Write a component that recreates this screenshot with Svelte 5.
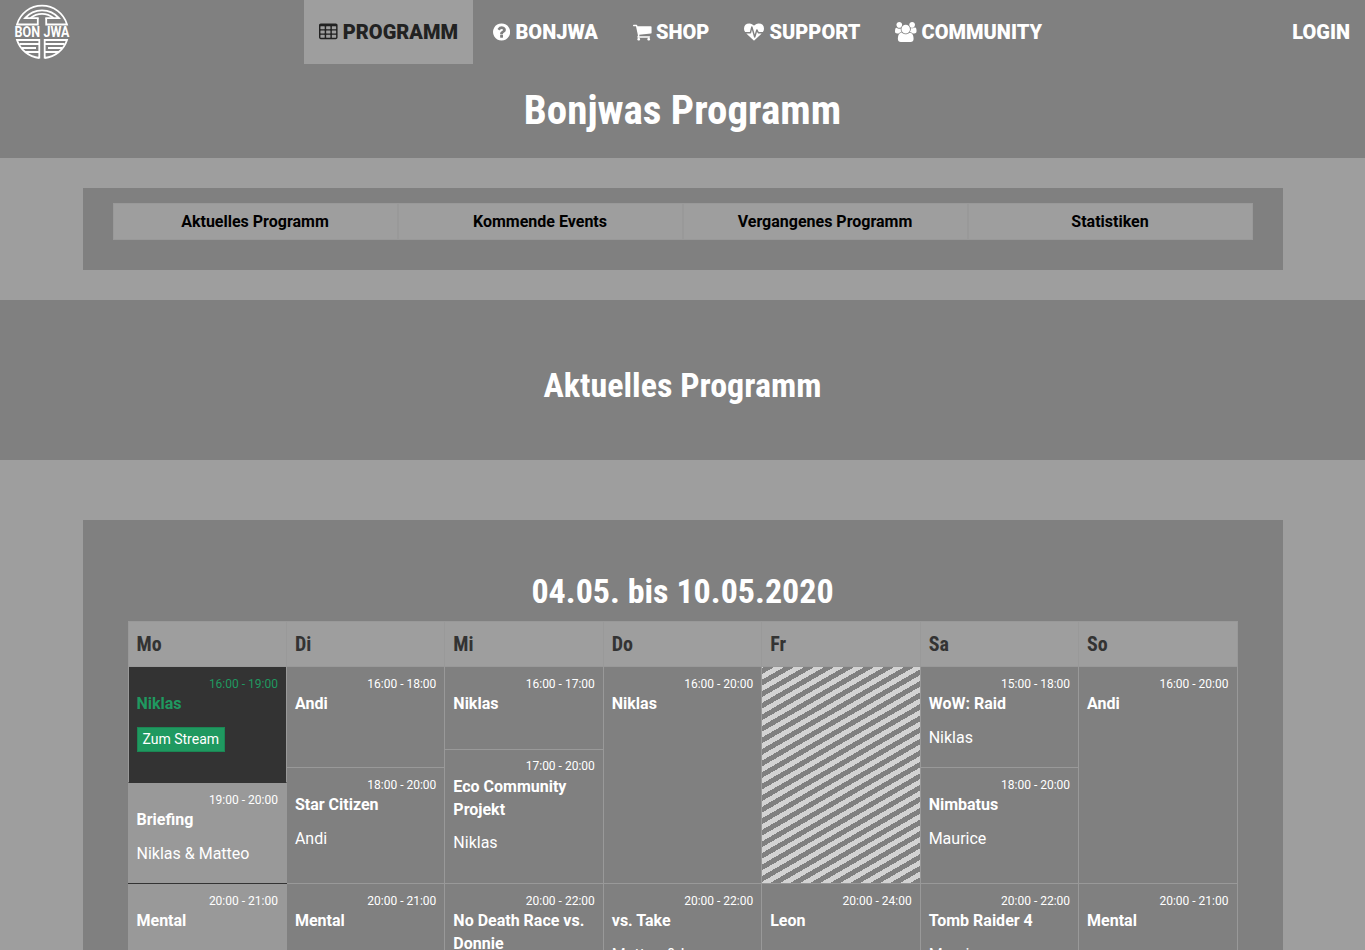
<script>
  const icons = {
    table: {
      box: '64 0 1664 1792', w: 18.57,
      d: 'M576 1376v-192q0-14-9-23t-23-9h-320q-14 0-23 9t-9 23v192q0 14 9 23t23 9h320q14 0 23-9t9-23zm0-384v-192q0-14-9-23t-23-9h-320q-14 0-23 9t-9 23v192q0 14 9 23t23 9h320q14 0 23-9t9-23zm512 384v-192q0-14-9-23t-23-9h-320q-14 0-23 9t-9 23v192q0 14 9 23t23 9h320q14 0 23-9t9-23zm-512-768v-192q0-14-9-23t-23-9h-320q-14 0-23 9t-9 23v192q0 14 9 23t23 9h320q14 0 23-9t9-23zm512 384v-192q0-14-9-23t-23-9h-320q-14 0-23 9t-9 23v192q0 14 9 23t23 9h320q14 0 23-9t9-23zm512 384v-192q0-14-9-23t-23-9h-320q-14 0-23 9t-9 23v192q0 14 9 23t23 9h320q14 0 23-9t9-23zm-512-768v-192q0-14-9-23t-23-9h-320q-14 0-23 9t-9 23v192q0 14 9 23t23 9h320q14 0 23-9t9-23zm512 384v-192q0-14-9-23t-23-9h-320q-14 0-23 9t-9 23v192q0 14 9 23t23 9h320q14 0 23-9t9-23zm0-384v-192q0-14-9-23t-23-9h-320q-14 0-23 9t-9 23v192q0 14 9 23t23 9h320q14 0 23-9t9-23zm128-320v1088q0 66-47 113t-113 47h-1344q-66 0-113-47t-47-113v-1088q0-66 47-113t113-47h1344q66 0 113 47t47 113z'
    },
    question: {
      box: '128 0 1536 1792', w: 17.14,
      d: 'M1024 1376v-192q0-14-9-23t-23-9h-192q-14 0-23 9t-9 23v192q0 14 9 23t23 9h192q14 0 23-9t9-23zm256-672q0-88-55.5-163t-138.5-116-170-41q-243 0-371 213-15 24 8 42l132 100q7 6 19 6 16 0 25-12 53-68 86-92 34-24 86-24 48 0 85.5 26t37.5 59q0 38-20 61t-68 45q-63 28-115.5 86.5t-52.5 125.5v36q0 14 9 23t23 9h192q14 0 23-9t9-23q0-19 21.5-49.5t54.5-49.5q32-18 49-28.5t46-35 44.5-48 28-60.5 12.5-81zm384 192q0 209-103 385.5t-279.5 279.5-385.5 103-385.5-103-279.5-279.5-103-385.5 103-385.5 279.5-279.5 385.5-103 385.5 103 279.5 279.5 103 385.5z'
    },
    cart: {
      box: '64 0 1664 1792', w: 18.57,
      d: 'M704 1536q0 52-38 90t-90 38-90-38-38-90 38-90 90-38 90 38 38 90zm896 0q0 52-38 90t-90 38-90-38-38-90 38-90 90-38 90 38 38 90zm128-1088v512q0 24-16.5 42.5t-40.5 21.5l-1044 122q13 60 13 70 0 16-24 64h920q26 0 45 19t19 45-19 45-45 19h-1024q-26 0-45-19t-19-45q0-11 8-31.5t16-36 21.5-40 15.5-29.5l-177-823h-204q-26 0-45-19t-19-45 19-45 45-19h256q16 0 28.5 6.5t19.5 15.5 13 24.5 8 26 5.5 29.5 4.5 26h1201q26 0 45 19t19 45z'
    },
    heart: {
      box: '0 -64 1792 1792', w: 20,
      d: 'M1280 896h305q-5 6-10 10.5t-9 7.5l-3 4-623 600q-18 18-44 18t-44-18l-624-602q-5-2-21-20h369q22 0 39.5-13.5t22.5-34.5l70-281 190 667q6 20 23 33t39 13q21 0 38-13t23-33l146-485 56 112q18 35 57 35zm512-428q0 145-103 300h-369l-111-221q-8-17-25.5-27t-36.5-8q-45 5-56 46l-129 430-196-686q-6-20-23.5-33t-39.5-13-39 13.5-22 34.5l-116 464h-423q-103-155-103-300 0-220 127-344t351-124q62 0 126.5 21.5t120 58 95.5 68.5 76 68q36-36 76-68t95.5-68.5 120-58 126.5-21.5q224 0 351 124t127 344z',
      dy: 64
    },
    group: {
      box: '0 0 1920 1792', w: 21.43,
      d: 'M593 896q-162 5-265 128h-134q-82 0-138-40.5t-56-118.5q0-353 124-353 6 0 43.5 21t97.5 42.5 119 21.5q67 0 133-23-5 37-5 66 0 159 93 286zm1071 637q0 120-73 189.5t-194 69.5h-874q-121 0-194-69.5t-73-189.5q0-53 3.5-103.5t14-109 26.5-108.5 43-97.5 62-81 85.5-53.5 111.5-20q10 0 43 21.5t73 48 107 48 135 21.5 135-21.5 107-48 73-48 43-21.5q61 0 111.5 20t85.5 53.5 62 81 43 97.5 26.5 108.5 14 109 3.5 103.5zm-1024-1277q0 106-75 181t-181 75-181-75-75-181 75-181 181-75 181 75 75 181zm704 384q0 159-112.5 271.5t-271.5 112.5-271.5-112.5-112.5-271.5 112.5-271.5 271.5-112.5 271.5 112.5 112.5 271.5zm576 225q0 78-56 118.5t-138 40.5h-134q-103-123-265-128 93-127 93-286 0-29-5-66 66 23 133 23 59 0 119-21.5t97.5-42.5 43.5-21q124 0 124 353zm-128-609q0 106-75 181t-181 75-181-75-75-181 75-181 181-75 181 75 75 181z'
    }
  };

  const nav = [
    { label: 'PROGRAMM', icon: 'table', w: 169, active: true },
    { label: 'BONJWA', icon: 'question', w: 135 },
    { label: 'SHOP', icon: 'cart', w: 106.4 },
    { label: 'SUPPORT', icon: 'heart', w: 146 },
    { label: 'COMMUNITY', icon: 'group', w: 176.6 }
  ];

  const tabs = ['Aktuelles Programm', 'Kommende Events', 'Vergangenes Programm', 'Statistiken'];

  // h: slot height in pixels, including its bottom rule
  const days = [
    { name: 'Mo', today: true, slots: [
      { time: '16:00 - 19:00', title: 'Niklas', live: true, h: 116 },
      { time: '19:00 - 20:00', title: 'Briefing', host: 'Niklas & Matteo', h: 101 },
      { time: '20:00 - 21:00', title: 'Mental', h: 101 }
    ] },
    { name: 'Di', slots: [
      { time: '16:00 - 18:00', title: 'Andi', h: 101 },
      { time: '18:00 - 20:00', title: 'Star Citizen', host: 'Andi', h: 116 },
      { time: '20:00 - 21:00', title: 'Mental', h: 101 }
    ] },
    { name: 'Mi', slots: [
      { time: '16:00 - 17:00', title: 'Niklas', h: 83 },
      { time: '17:00 - 20:00', title: 'Eco Community Projekt', host: 'Niklas', h: 134, tight: true },
      { time: '20:00 - 22:00', title: 'No Death Race vs. Donnie', h: 134 }
    ] },
    { name: 'Do', slots: [
      { time: '16:00 - 20:00', title: 'Niklas', h: 217 },
      { time: '20:00 - 22:00', title: 'vs. Take', host: 'Matteo & Leon', h: 134 }
    ] },
    { name: 'Fr', slots: [
      { empty: true, h: 217 },
      { time: '20:00 - 24:00', title: 'Leon', h: 217 }
    ] },
    { name: 'Sa', slots: [
      { time: '15:00 - 18:00', title: 'WoW: Raid', host: 'Niklas', h: 101 },
      { time: '18:00 - 20:00', title: 'Nimbatus', host: 'Maurice', h: 116 },
      { time: '20:00 - 22:00', title: 'Tomb Raider 4', host: 'Maurice', h: 134 }
    ] },
    { name: 'So', slots: [
      { time: '16:00 - 20:00', title: 'Andi', h: 217 },
      { time: '20:00 - 21:00', title: 'Mental', h: 101 }
    ] }
  ];
</script>

<div class="page">
  <header>
    <nav>
      <a class="logo" href="#home" aria-label="Bonjwa">
        <svg width="60" height="58" viewBox="0 0 60 58">
          <g fill="none" stroke="#fff" stroke-width="1.8">
            <path d="M24.800 15.200V21.500H4A26 26 0 0 1 54 21.500H33.200V15.200" />
            <path d="M25.700 15.200H12A22.300 22.300 0 0 1 46 15.200H32.300" />
            <path d="M17.500 15A18 18 0 0 1 40.500 15" />
            <path d="M26.300 55.500V37H4A26.200 26.200 0 0 0 26.300 55Z" />
            <path d="M31.700 55.500V37H54A26.200 26.200 0 0 1 31.700 55Z" />
            <path d="M6.500 41H26M9 45H23M12 49H26M51.500 41H32M49 45H35M46 49H32" />
          </g>
          <text x="1.500" y="34" textLength="25.500" lengthAdjust="spacingAndGlyphs">BON</text>
          <text x="30.500" y="34" textLength="26" lengthAdjust="spacingAndGlyphs">JWA</text>
        </svg>
      </a>
      <ul>
        {#each nav as item}
          <li class:active={item.active} style="width: {item.w}px">
            <svg width={icons[item.icon].w} height="20" viewBox={icons[item.icon].box}><path d={icons[item.icon].d} transform="translate(0 {icons[item.icon].dy ?? 0})" /></svg>
            <span>{item.label}</span>
          </li>
        {/each}
      </ul>
      <a class="login" href="#login">LOGIN</a>
    </nav>
    <h1>Bonjwas Programm</h1>
  </header>

  <div class="panel tabs-panel">
    <div class="tabs">
      {#each tabs as tab}
        <a href="#tab">{tab}</a>
      {/each}
    </div>
  </div>

  <section class="band"><h2>Aktuelles Programm</h2></section>

  <div class="panel plan-panel">
    <h2>04.05. bis 10.05.2020</h2>
    <div class="plan">
      {#each days as day}
        <div class="day" class:today={day.today}>
          <h3>{day.name}</h3>
          {#each day.slots as slot}
            <div class="slot" class:live={slot.live} class:empty={slot.empty} class:tight={slot.tight} style="height: {slot.h}px">
              {#if !slot.empty}
                <div class="time">{slot.time}</div>
                <div class="title">{slot.title}</div>
                {#if slot.host}<p>{slot.host}</p>{/if}
                {#if slot.live}<a class="btn" href="#stream">Zum Stream</a>{/if}
              {/if}
            </div>
          {/each}
        </div>
      {/each}
    </div>
  </div>
</div>

<style>
  :global(body) { margin: 0; background: #9e9e9e; overflow: hidden; }
  .page {
    height: 950px;
    overflow: hidden;
    font: 16px/1.42857 Roboto, sans-serif;
    color: #fff;
    background: #9e9e9e;
  }
  .page * { box-sizing: border-box; }
  a { color: inherit; text-decoration: none; }
  header { height: 158px; background: #808080; }
  nav { display: flex; height: 64px; font-size: 20px; font-weight: 900; line-height: 64px; }
  .logo { width: 304px; padding: 3px 0 0 13px; line-height: 0; }
  .logo text { font: 700 14px Roboto, sans-serif; fill: #fff; }
  ul { display: flex; gap: 5px; margin: 0; padding: 0; list-style: none; }
  li { display: flex; align-items: center; justify-content: space-between; padding: 0 15px; white-space: nowrap; }
  li svg { fill: currentColor; flex: none; }
  li.active { background: #9e9e9e; color: #222; }
  .login { margin-left: auto; padding-right: 15px; }
  h1, h2, h3 { margin: 0; font-family: "Roboto Condensed", Roboto, sans-serif; font-weight: 700; text-align: center; }
  h1 { font-size: 41px; line-height: 46px; padding-top: 23px; }
  h2 { font-size: 34px; line-height: 38px; }
  .panel { width: 1200px; margin: 0 auto; background: #808080; }
  .tabs-panel { height: 82px; margin-top: 30px; padding: 15px 30px; }
  .tabs {
    display: grid;
    grid-template-columns: repeat(4, 1fr);
    height: 37px;
    border: solid #999;
    border-width: 1px 0;
    background: #9e9e9e;
  }
  .tabs a {
    border: solid #999;
    border-width: 0 1px;
    color: #000;
    font-weight: 700;
    line-height: 35px;
    text-align: center;
  }
  .band { margin-top: 30px; height: 160px; padding-top: 66px; background: #808080; }
  .plan-panel { height: 600px; margin-top: 60px; padding: 52px 45px 0; }
  .plan {
    display: grid;
    grid-template-columns: repeat(7, 1fr);
    margin-top: 11px;
    border-right: 1px solid #999;
  }
  .day { border-left: 1px solid #999; }
  h3 {
    height: 46px;
    padding-left: 8px;
    border-top: 1px solid #999;
    border-bottom: 1px solid #999;
    background: #9e9e9e;
    color: #333;
    font-size: 20px;
    line-height: 45px;
    text-align: left;
  }
  .slot { padding: 8.7px 8px 0; border-bottom: 1px solid #999; }
  .slot.tight { padding-top: 8.3px; }
  .slot.tight .title { padding-top: 0.5px; }
  .slot.tight p { margin-top: 10.5px; }
  .time { font-size: 12px; line-height: 17.14px; text-align: right; }
  .title { font-weight: 700; }
  p { margin: 11px 0 0; }
  .today .slot { background: #999; border-color: #333; margin-left: -1px; margin-right: -1px; padding: 8.7px 9px 0; position: relative; }
  .today .slot.live { background: #333; color: #1f9960; border-left: 1px solid #999; border-right: 1px solid #999; padding: 8.7px 8px 0; }
  .btn {
    display: inline-block;
    height: 25px;
    margin-top: 11.3px;
    padding: 0 5px;
    border: 1px solid #1b8754;
    background: #1f9960;
    color: #fff;
    font-size: 14px;
    line-height: 23px;
  }
  .slot.empty { background: repeating-linear-gradient(-30deg, #808080 0 5px, #d3d3d3 5px 10px); }
</style>
